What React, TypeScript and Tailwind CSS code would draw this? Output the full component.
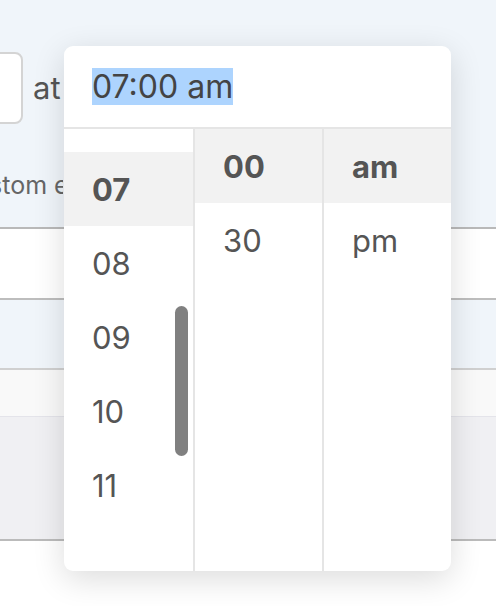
import React from "react";

const font = { fontFamily: 'Inter, "Noto Sans", sans-serif' };

const hours = ["07", "08", "09", "10", "11"];

function Column({
  items,
  selected,
  width,
  padTop = 0,
  children,
}: {
  items: string[];
  selected: string;
  width: string;
  padTop?: number;
  children?: React.ReactNode;
}) {
  return (
    <div className={`relative overflow-hidden ${width}`} style={{ paddingTop: padTop }}>
      {items.map((item) => (
        <div
          key={item}
          className={`h-[74px] flex items-center pl-7 pt-[3px] text-[31px] text-[#555] ${
            item === selected ? "bg-[#f2f2f2] font-bold" : ""
          }`}
        >
          {item}
        </div>
      ))}
      {children}
    </div>
  );
}

function TimePicker() {
  return (
    <div className="absolute left-[64px] top-[46px] w-[387px] h-[525px] bg-white rounded-[9px] shadow-[0_8px_32px_rgba(0,0,0,0.14)] flex flex-col overflow-hidden">
      <div className="h-[83px] shrink-0 flex items-center pl-7 border-b-2 border-[#e5e5e5]">
        <span className="bg-[#add4fe] text-[#444] text-[32px] leading-[37px]">07:00 am</span>
      </div>
      <div className="flex flex-1">
        <Column items={hours} selected="07" width="w-[129px]" padTop={23}>
          <div className="absolute right-[5px] top-[177px] w-[13px] h-[150px] rounded-full bg-[#808080]" />
        </Column>
        <div className="w-[2px] bg-[#e5e5e5]" />
        <Column items={["00", "30"]} selected="00" width="w-[127px]" />
        <div className="w-[2px] bg-[#e5e5e5]" />
        <Column items={["am", "pm"]} selected="am" width="flex-1" />
      </div>
    </div>
  );
}

export default function App() {
  return (
    <div className="relative w-[496px] h-[606px] overflow-hidden bg-white" style={font}>
      <div className="h-[227px] bg-[#f0f5fa] pt-[52px]">
        <div className="flex items-center gap-[10px]">
          <div className="w-[60px] h-[72px] ml-[-37px] bg-white border-2 border-[#d4d4d4] rounded-[8px]" />
          <span className="text-[31px] text-[#555]">at</span>
        </div>
        <div className="w-[63px] mt-[46px] overflow-hidden">
          <div className="ml-[-44px] text-[25px] leading-[30px] text-[#666] whitespace-nowrap">
            Custom events
          </div>
        </div>
      </div>
      <div className="h-[2px] bg-[#b9b9b9]" />
      <div className="h-[69px] bg-white" />
      <div className="h-[2px] bg-[#bdbdbd]" />
      <div className="h-[68px] bg-[#f0f5fa]" />
      <div className="h-[2px] bg-[#d0d0d0]" />
      <div className="h-[46px] bg-[#f9f9f9]" />
      <div className="h-[1px] bg-[#e4e4ea]" />
      <div className="h-[122px] bg-[#f0f0f3]" />
      <div className="h-[2px] bg-[#bbbbbb]" />
      <TimePicker />
    </div>
  );
}
